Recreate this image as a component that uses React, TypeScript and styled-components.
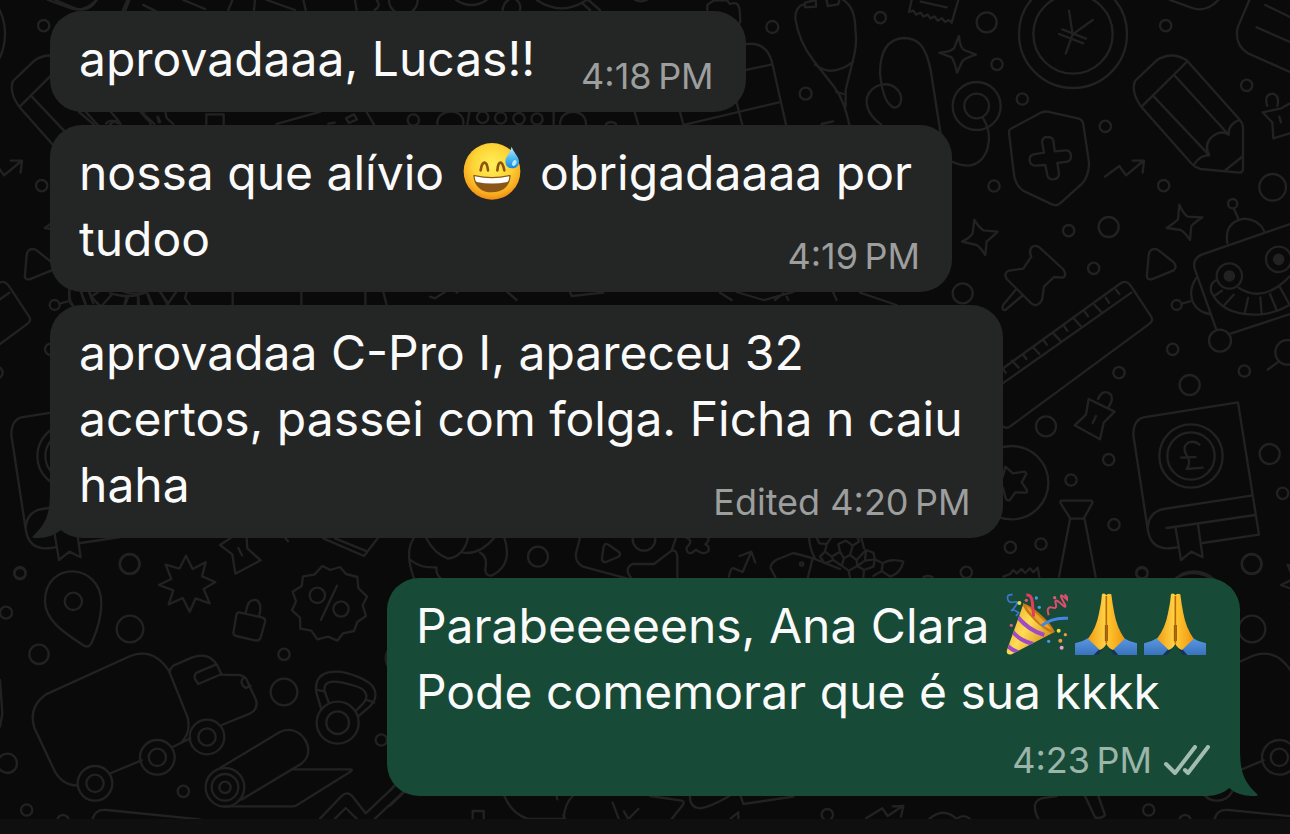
import React from "react";
import styled, { createGlobalStyle } from "styled-components";

const GlobalStyle = createGlobalStyle`
  * { box-sizing: border-box; }
  body { margin: 0; background: #0a0a0a; }
`;

type Side = "in" | "out";

const fills: Record<Side, string> = { in: "#242625", out: "#174b37" };

const Screen = styled.div`
  display: flex;
  flex-direction: column;
  min-height: 100vh;
  font-family: Inter, "Liberation Sans", sans-serif;
`;

const Chat = styled.main`
  position: relative;
  display: flex;
  flex-direction: column;
  gap: 13px;
  padding: 11px 50px 23px;
  overflow: hidden;
`;

const Wallpaper = styled.svg`
  position: absolute;
  top: 0;
  left: 0;
  fill: none;
  stroke: #222222;
  stroke-width: 7px;
  stroke-linecap: round;
  stroke-linejoin: round;
`;

const Composer = styled.footer`
  flex: 1;
  min-height: 15px;
  background: #0f0f0f;
`;

const Bubble = styled.article<{ $side: Side }>`
  position: relative;
  align-self: ${(p) => (p.$side === "in" ? "flex-start" : "flex-end")};
  margin-top: ${(p) => (p.$side === "in" ? "0" : "27px")};
  padding: ${(p) => (p.$side === "in" ? "15px 32px 16px 29px" : "15px 30px 16px 29px")};
  border-radius: 32px;
  background: ${(p) => fills[p.$side]};
  color: #fafafa;
`;

const Line = styled.p<{ $reserve?: boolean }>`
  margin: 0;
  padding-right: ${(p) => (p.$reserve ? "8px" : "0")};
  font-size: 48px;
  line-height: 66px;
  white-space: nowrap;
`;

const LastRow = styled.div`
  display: flex;
  align-items: flex-start;
  justify-content: space-between;
  gap: 46px;
`;

const Meta = styled.div<{ $side: Side }>`
  display: flex;
  align-items: center;
  justify-content: flex-end;
  gap: 12px;
  padding-top: ${(p) => (p.$side === "in" ? "30px" : "15px")};
  color: ${(p) => (p.$side === "in" ? "#9d9e9e" : "#9bb5aa")};
  font-size: 36px;
  line-height: 40px;
  white-space: nowrap;
`;

const Emoji = styled.svg`
  width: 62px;
  height: 62px;
  margin: 0 4px 0 3px;
  vertical-align: -12px;
`;

const Tail = styled.svg<{ $side: Side }>`
  position: absolute;
  bottom: -1px;
  ${(p) => (p.$side === "in" ? "left: -18px;" : "right: -18px; transform: scaleX(-1);")}
  width: 42px;
  height: 54px;
  fill: ${(p) => fills[p.$side]};
`;

const Ticks = styled.svg`
  width: 46px;
  height: 30px;
  fill: none;
  stroke: #a3bcb1;
  stroke-width: 4px;
  stroke-linecap: round;
  stroke-linejoin: round;
`;

const BubbleTail = ({ side }: { side: Side }) => (
  <Tail $side={side} viewBox="0 0 42 54" aria-hidden="true">
    <path d="M18 4C18 26 16 37 1 51Q-1 53 3 53Q18 54 29 45L40 47V4Z" />
  </Tail>
);

const SweatSmile = () => (
  <Emoji viewBox="20 30 186 186" role="img" aria-label="grinning face with sweat">
    <defs>
      <radialGradient id="face" cx="50%" cy="38%" r="62%">
        <stop offset="0" stopColor="#fff05a" />
        <stop offset=".55" stopColor="#fdd436" />
        <stop offset=".85" stopColor="#f8ac20" />
        <stop offset="1" stopColor="#ee8c14" />
      </radialGradient>
      <linearGradient id="drop" x1="0" y1="0" x2="0" y2="1">
        <stop offset="0" stopColor="#c4efff" />
        <stop offset=".5" stopColor="#56bdf2" />
        <stop offset="1" stopColor="#1689dc" />
      </linearGradient>
    </defs>
    <circle cx="113" cy="124" r="85" fill="url(#face)" />
    <path d="M79 121Q82 99 90 98T101 121M129 121Q131 99 138 98T150 121" fill="none" stroke="#8a5410" strokeWidth="8" strokeLinecap="round" />
    <path d="M57 137Q56 134 61 135Q113 147 165 135Q170 134 169 138C166 171 143 187 113 187S60 171 57 137Z" fill="#8b5718" />
    <path d="M61 139Q113 151 165 139Q165 152 159 156Q113 165 67 156Q61 151 61 139Z" fill="#ffffff" />
    <path d="M172 50C177 67 194 79 194 95C194 108 185 115 173 115S153 107 153 94C153 79 168 69 172 50Z" fill="url(#drop)" />
    <ellipse cx="180" cy="99" rx="6" ry="9" fill="#b5eaff" transform="rotate(25 180 99)" />
  </Emoji>
);

const PartyPopper = () => (
  <Emoji viewBox="45 39 186 186" role="img" aria-label="party popper">
    <defs>
      <linearGradient id="cone" x1="0" y1="0" x2="1" y2=".6">
        <stop offset="0" stopColor="#e79d24" />
        <stop offset=".5" stopColor="#ffdd55" />
        <stop offset="1" stopColor="#d38c1b" />
      </linearGradient>
      <clipPath id="coneClip">
        <path d="M98 70L47 213Q47 226 62 223L192 155Q155 130 98 70Z" />
      </clipPath>
    </defs>
    <path d="M98 70L47 213Q47 226 62 223L192 155Q155 130 98 70Z" fill="url(#cone)" />
    <g clipPath="url(#coneClip)" fill="none" stroke="#a04bc5" strokeWidth="12">
      <path d="M76 106Q110 150 160 165M60 148Q80 180 127 192M46 193Q60 210 86 218" />
    </g>
    <path d="M96 72C91 88 163 161 187 158C206 151 112 63 96 72Z" fill="#c77b15" />
    <path d="M105 78C115 82 171 130 183 151L151 134Q120 105 105 78Z" fill="#e8a62c" />
    <path d="M106 45Q122 43 124 67T128 110" fill="none" stroke="#e83a5c" strokeWidth="9" />
    <path d="M152 137Q185 111 231 115" fill="none" stroke="#4386e5" strokeWidth="9" />
    <path d="M65 44Q45 42 51 60Q55 70 70 66T73 79T62 91T83 98L75 108" fill="none" stroke="#3979d8" strokeWidth="5" />
    <path d="M173 106L170 92Q171 78 185 83T194 70T211 72T216 62T229 59T221 43" fill="none" stroke="#e14d70" strokeWidth="6" />
    <g fill="#f1dc40"><circle cx="85" cy="69" r="6" /><circle cx="203" cy="152" r="6" /></g>
    <g fill="#459be8"><circle cx="136" cy="54" r="5" /><circle cx="145" cy="82" r="5" /><circle cx="173" cy="184" r="5" /></g>
    <g fill="#ed9b3d"><circle cx="223" cy="164" r="5" /><circle cx="208" cy="182" r="6" /></g>
    <g fill="#dd5a79"><circle cx="106" cy="61" r="5" /><circle cx="191" cy="53" r="5" /><circle cx="61" cy="136" r="5" /></g>
    <circle cx="212" cy="203" r="6" fill="#ef9ccd" />
  </Emoji>
);

const FoldedHands = () => (
  <Emoji viewBox="252 39 186 186" role="img" aria-label="folded hands">
    <defs>
      <linearGradient id="hand" x1="0" y1="0" x2="1" y2="0">
        <stop offset="0" stopColor="#f09d13" />
        <stop offset=".45" stopColor="#ffd044" />
        <stop offset=".55" stopColor="#ffc52f" />
        <stop offset="1" stopColor="#ee9610" />
      </linearGradient>
      <linearGradient id="cuff" x1="0" y1="0" x2="0" y2="1">
        <stop offset="0" stopColor="#5a98e0" />
        <stop offset="1" stopColor="#3a72bd" />
      </linearGradient>
    </defs>
    <path d="M252 190Q274 186 292 174L326 209L318 225H252ZM438 190Q416 186 398 174L364 209L372 225H438Z" fill="url(#cuff)" />
    <path d="M308 225L326 206L336 207L322 225ZM382 225L366 206L356 207L368 225Z" fill="#173353" />
    <path d="M333 42Q342 38 346 46Q351 38 361 43Q364 70 370 100Q378 145 401 176L366 210Q352 204 346 191Q340 204 326 210L291 176Q316 145 324 100Q331 70 333 42Z" fill="url(#hand)" />
    <path d="M346 48V190" fill="none" stroke="#b96b08" strokeWidth="5" />
    <path d="M343 135V183M349 135V183" fill="none" stroke="#8b5208" strokeWidth="3" />
  </Emoji>
);

type Dot = [number, number, number];
const Dots = ({ items }: { items: Dot[] }) => (
  <>
    {items.map(([x, y, r]) => (
      <circle key={`${x}-${y}-${r}`} cx={x} cy={y} r={r} />
    ))}
  </>
);

/* School, medical and robot doodles: the upper half of the repeating tile. */
const UpperDoodles = () => (
  <g id="upper">
    <g transform="translate(860 0) scale(.33333)">
      <Dots
        items={[
          [61, 53, 17], [411, 193, 17], [487, 297, 17], [736, 379, 17], [402, 558, 17], [911, 557, 17],
          [1160, 256, 17], [917, 77, 17], [626, 692, 17], [701, 805, 17], [1118, 611, 14], [950, 915, 15],
          [380, 67, 30], [746, 681, 30], [308, 880, 30], [1238, 562, 40], [639, 102, 162], [639, 102, 119],
          [350, 318, 72], [350, 318, 37], [1080, 1022, 33], [1108, 828, 38], [1256, 778, 38],
        ]}
      />
      <g fill="#222222"><circle cx="1108" cy="828" r="14" /><circle cx="1256" cy="778" r="14" /></g>
      <path d="M627 32L638 103L698 60M638 103L617 161M607 88L678 116M597 102L670 130" />
      <path d="M155 0L147 36L160 32L168 44L182 38L190 50L203 44L211 55L224 49L233 62L246 55L255 66L266 60L275 68L295 0M182 5L260 22" />
      <path d="M275 485Q302 497 326 497C385 490 405 410 368 352" />
      <path d="M242 402L212 210C198 142 177 114 132 114C76 117 60 167 60 220C65 269 76 316 104 323C126 319 130 288 112 269C85 240 36 252 22 290C12 324 38 355 64 374" />
      <path d="M297 108Q300 143 312 150L348 164Q315 174 307 184L291 218Q284 185 275 172L238 158Q270 156 282 145Z" />
      <path d="M343 659Q355 681 370 691L413 695Q393 715 380 724L376 765Q360 741 350 735L306 725Q329 714 338 700Z" />
      <path d="M958 614Q970 641 983 650L1027 652Q1004 668 994 678L990 720Q973 695 962 690L920 684Q944 668 954 658Z" />
      <path d="M545 337Q558 332 572 337L654 355Q668 358 670 373L687 487Q688 526 666 551L603 608Q590 620 576 613L489 572Q464 554 461 516L447 398Q446 390 455 385Z" />
      <path d="M546 425Q548 411 562 411Q578 411 580 422L584 454L616 451Q630 450 633 466Q634 482 622 485L592 489L597 521Q596 537 580 538Q565 539 562 526L556 495L525 497Q511 496 509 481Q508 467 520 463L552 458Z" />
      <path d="M735 530L778 498L798 526L850 483M818 482L852 482L848 518" />
      <path d="M825 243L890 181Q935 152 980 181L1138 358Q1148 369 1149 382V505Q1149 518 1138 518L1022 507Q1006 503 995 491L845 322Q812 277 825 243Z" />
      <path d="M845 320L980 186M878 286L1048 466M943 226L1106 404M1004 491Q1020 465 1048 466Q1030 434 1056 411T1106 404Q1104 372 1138 360M1097 510L1149 468" />
      <path d="M1168 0L1133 82Q1122 134 1164 160L1290 216M1216 15L1290 51M1190 82L1290 126M930 0L1000 25Q1040 37 1075 0" />
      <path d="M1222 318Q1210 282 1240 281Q1260 290 1252 318M1290 310L1264 325L1208 337Q1224 355 1237 367L1240 415L1290 400M1258 350L1263 367" />
      <path d="M515 742Q525 733 538 742L609 807Q623 827 608 833L582 831L552 860L546 900Q532 924 514 910L440 837Q430 817 447 812L490 806L514 770Q506 751 515 742ZM466 871L430 914Q423 932 436 930L486 888" />
      <path d="M873 750Q886 743 897 752L940 786Q953 800 941 811L875 838Q858 840 861 823L866 765Q867 756 873 750Z" />
      <path d="M1290 672L1025 764Q995 777 1005 809L1068 986M1112 1001L1290 942M1102 729Q1092 665 1154 656Q1198 660 1212 692M1122 626L1135 656M1008 835Q985 870 998 905Q1012 935 1048 942M990 904L965 911" />
      <path d="M1070 840Q1047 850 1054 877C1082 934 1142 948 1205 943Q1250 938 1290 914M1136 863Q1210 912 1290 828M1066 886L1086 872M1094 914L1121 884M1155 936L1164 894M1205 942L1201 892M1250 930L1230 882M1286 909L1260 862" />
    </g>
    <g transform="translate(860 260) scale(.33333)">
      <Dots
        items={[
          [938, 268, 17], [1153, 333, 17], [777, 338, 17], [746, 599, 17], [633, 660, 17], [762, 794, 17],
          [451, 862, 17], [543, 852, 17], [319, 937, 17], [846, 938, 17], [1268, 700, 17],
          [989, 375, 30], [558, 499, 30], [1229, 582, 30], [1175, 912, 30], [993, 588, 95], [993, 588, 71],
          [455, 668, 110], [1283, 277, 37],
        ]}
      />
      <path d="M1257 304L1223 329" />
      <path d="M360 375L779 72Q797 57 812 77L873 169Q882 183 866 193L448 501Q431 509 420 489L360 400M370 411L814 98M426 323L437 338M456 302L476 323M488 282L499 297M518 260L538 282M550 239L560 254M580 220L600 241M612 198L622 212M642 176L662 198M674 155L684 169M704 135L724 156M737 113L747 128M768 89L778 102" />
      <path d="M714 417Q727 386 751 402Q763 416 745 442M686 417L714 431L764 455L731 488L720 538L644 496L678 464ZM708 468L698 489" />
      <path d="M436 620L459 640L493 635Q503 638 496 647L485 667L501 690Q503 699 494 698L466 697L449 721Q439 723 436 711L429 683L400 666L429 649Z" />
      <path d="M604 722H693Q700 723 696 731L671 776H631L602 730Q600 724 604 722ZM630 778L597 950M674 778L707 950" />
      <path d="M850 472Q820 480 820 525L863 807Q872 873 938 864L951 862M850 472L1134 427L1197 824L1028 849M863 807Q865 755 912 747L1174 707M920 804L1185 765M946 800L963 900L994 875L1028 892L1014 793" />
      <path d="M1018 554Q1005 540 984 548Q965 563 980 586Q995 606 980 627M963 593L1006 591M980 627L1028 623" />
    </g>
  </g>
);

/* Truck, map pin and kettlebell doodles: the lower half of the tile. */
const LowerDoodles = () => (
  <g id="lower">
    <g transform="translate(0 530) scale(.33333)">
      <Dots
        items={[
          [60, 131, 17], [18, 248, 18], [852, 373, 17], [550, 784, 17], [80, 840, 17], [1144, 630, 17],
          [389, 102, 29], [117, 373, 29], [22, 700, 29], [390, 297, 40], [852, 486, 40], [220, 214, 26],
          [952, 196, 23], [1023, 237, 23], [285, 760, 52], [285, 760, 26], [472, 682, 52], [472, 682, 26],
          [621, 621, 52], [621, 621, 26], [675, 772, 58], [675, 772, 40], [675, 772, 17],
          [1013, 578, 63], [1013, 578, 34], [189, 872, 17], [1202, 385, 45],
        ]}
      />
      <path d="M276 336Q268 355 252 347C202 314 135 275 135 214C135 90 304 97 304 220C304 265 290 305 276 336Z" />
      <path d="M558 77L578 117L617 97L606 139L646 156L611 177L629 220L587 205L569 245L548 204L506 223L520 181L477 165L514 147L497 104L538 116Z" />
      <path d="M660 45L691 25M660 45L697 73L706 131L782 91L742 55L740 25M715 54L726 76" />
      <path d="M718 247L788 263Q797 267 795 276L782 323Q777 334 765 331L708 318Q698 314 701 303L709 255Q711 246 718 247ZM738 245Q745 205 767 210Q784 214 780 246L777 260" />
      <path d="M967 108L991 120L1020 111L1038 132L1072 141L1075 174L1101 200L1088 226L1098 258L1072 276L1062 303L1029 310L1012 332L984 320L952 328L934 302L901 296L900 263L876 241L888 214L878 185L905 168L909 139L943 134ZM1011 167L963 269" />
      <path d="M233 767Q183 766 160 715L103 593Q84 531 138 493L391 378Q461 352 507 423L562 560Q575 604 544 638M333 729L425 691M518 651L571 625M665 585L751 550Q775 537 768 510L739 447Q728 433 707 435L665 434L650 403Q625 365 577 382L520 407Q508 418 509 430M649 403L590 428Q581 435 585 447L595 462L665 432M729 445Q717 462 738 474L752 467" />
      <path d="M660 714L838 607C899 574 957 662 904 701L724 809M874 718H1053Q1059 720 1051 725L890 826Q886 829 878 829H671" />
      <path d="M964 538L949 488C939 415 1014 415 1072 440C1132 462 1139 498 1110 529L1076 558M986 517L974 484C967 441 1023 455 1066 468C1106 480 1107 505 1084 526L1069 541M949 479L972 484M1098 509L1123 518" />
      <path d="M856 25L864 34M970 25L1092 78L1133 25M1005 25L1103 65" />
      <path d="M278 866Q286 836 320 840L600 868M960 866L1023 800Q1041 780 1059 801L1097 850L1182 770M1005 866L1037 834L1070 866M1125 866L1216 780M0 450L7 550L0 590" />
    </g>
  </g>
);

/* Pieces that show between the bubbles. */
const GapDoodles = () => (
  <>
    <g transform="scale(.33333)">
      <path d="M165 0L230 27Q270 35 290 0M388 0L376 30M430 15L460 30M550 0L615 27M697 0L685 30M765 0L762 30M800 0L885 30M910 0L917 30M1065 0L1070 30M1130 0Q1145 18 1124 30" />
      <path d="M237 336L282 374M318 370Q335 354 354 370M425 336L463 372M496 336L500 354L520 372M475 352L480 366M619 372V343H671V372M830 372L960 336M1100 336L1122 374M1038 355L1062 343L1071 358L1047 369ZM985 371L1004 368" />
      <Dots items={[[1210, 0, 43], [1240, 360, 17]]} />
      <path d="M208 872V900Q209 910 215 914M242 872L257 912M265 872L280 910M330 880Q395 898 440 876M385 890L375 915M414 888V915M442 882L453 913M480 876L505 910L528 876M560 876L555 895L570 915M698 876V915M904 876V915M1096 876V915M1150 876L1160 915" />
    </g>
    <g transform="translate(430 0) scale(.33333)">
      <Dots items={[[1027, 81, 18], [1127, 281, 18], [158, 352, 17], [212, 354, 17], [267, 356, 17], [321, 357, 17]]} />
      <path d="M78 0Q125 30 170 0M218 30Q220 8 236 0M260 0Q275 12 270 30M320 0Q395 50 470 0M455 8L480 30M475 0L510 30M615 0Q632 8 650 0M832 30V15L850 2L890 0L900 12Q925 2 929 30L931 65L920 78" />
      <path d="M22 372C20 322 105 322 100 372M118 336L112 374M371 336V372M390 372C392 322 468 324 468 372M528 372Q543 360 558 372M614 336L625 374M750 336L760 374M765 374L1047 307M938 212L1023 194M930 136Q1006 115 1026 186L1068 374M918 300L937 374" />
      <path d="M1120 13Q1096 20 1096 55Q1106 124 1150 181L1215 264Q1242 300 1258 374M1240 0Q1277 24 1276 90Q1283 130 1268 184L1247 270V320M1155 193Q1205 235 1270 185M1218 275L1240 282M1125 8L1158 0M1125 8V22L1158 20V5M1190 0L1193 18L1225 13L1228 0M1175 372L1209 364" />
      <path d="M0 890L15 895L45 876M80 878L84 874M232 876L260 900M420 876L425 888L520 878M870 878L905 900M920 876L1000 900M1005 900L1090 876M1070 890L1075 900M1035 900L1060 880M1210 878L1220 900M1290 878L1400 915" />
    </g>
    <g transform="translate(390 500) scale(.33333)">
      <Dots items={[[444, 170, 30], [762, 118, 34], [1235, 192, 5], [1312, 944, 17]]} />
      <path d="M72 113C50 145 55 190 72 235M62 180Q90 205 140 202Q136 221 152 235M108 113Q132 160 174 176Q222 168 234 113M220 158Q270 164 313 113M270 158Q294 170 286 205Q284 228 305 227Q370 195 343 113" />
      <path d="M570 113L558 160Q553 186 579 200L710 235M641 140Q646 126 658 136L687 156Q695 164 684 171L648 186Q635 188 636 174ZM858 113L845 152L792 192H728Q700 205 724 235M845 152Q860 148 862 170V232M890 113Q912 123 890 142Q888 161 905 159L918 149Q938 167 955 154Q960 138 946 133Q963 116 952 113" />
      <path d="M1017 230Q1022 200 1032 205L1058 216L1084 155M1049 168L1084 155L1096 188M1156 231L1142 205Q1140 192 1158 180L1210 159L1270 175L1350 207M1268 175L1254 231M1257 113Q1260 150 1275 175" />
      <path d="M0 872L17 852M0 917L44 875M343 888Q366 942 415 957H520Q525 910 548 888M520 945L525 957M248 957V933H281V957M500 890L502 898M668 908L686 956M702 934L715 957L745 927M780 888L875 902Q884 904 879 914L845 957M900 888Q898 923 932 925Q963 920 1018 888M1052 888L1060 912L1210 890M1022 955L1045 937V957" />
    </g>
    <g transform="translate(840 500) scale(.33333)">
      <path d="M-70 113L-62 130L-40 132L-28 115M-40 132L-45 155L-25 170L0 155L-5 132L18 122L38 137L30 165L50 180L78 150L100 158L105 178L128 190L125 213L100 228M38 137L58 124L52 113M0 155L12 175L30 165M12 175L5 197L26 212L52 198L50 180M52 198L72 210L70 232M78 150L75 182L105 178M75 182L52 198M72 210L100 200L105 178M26 212L30 232M5 197L-20 180L-25 170M-20 180L-45 190L-60 170L-45 155M64 113L72 145M128 190Q154 174 190 185Q183 218 151 230L125 213" />
      <path d="M490 230L510 222L520 210L530 220L545 207L555 219L570 205L580 217L593 203L598 230M250 232Q264 224 278 232M1010 233Q1060 205 1110 233" />
      <path d="M78 955L127 925L143 948L188 918M158 919L190 918L183 950M268 957Q310 920 350 957Q370 940 390 957M595 957Q570 905 605 895L650 888M735 888L765 952Q785 957 795 945L775 888" />
    </g>
  </>
);

const Background = () => (
  <Wallpaper width="1290" height="819" viewBox="0 0 1290 819" aria-hidden="true">
    <UpperDoodles />
    <use href="#upper" x="-1122" />
    <LowerDoodles />
    <use href="#lower" x="1122" />
    <GapDoodles />
  </Wallpaper>
);

export default function App() {
  return (
    <Screen>
      <GlobalStyle />
      <Chat>
        <Background />
        <Bubble $side="in">
          <LastRow>
            <Line>aprovadaaa, Lucas!!</Line>
            <Meta $side="in"><time>4:18&#8201;PM</time></Meta>
          </LastRow>
        </Bubble>
        <Bubble $side="in">
          <Line $reserve>nossa que alívio <SweatSmile /> obrigadaaaa por</Line>
          <LastRow>
            <Line>tudoo</Line>
            <Meta $side="in"><time>4:19&#8201;PM</time></Meta>
          </LastRow>
        </Bubble>
        <Bubble $side="in">
          <BubbleTail side="in" />
          <Line $reserve>aprovadaa C-Pro I, apareceu 32</Line>
          <Line $reserve>acertos, passei com folga. Ficha n caiu</Line>
          <LastRow>
            <Line>haha</Line>
            <Meta $side="in"><span>Edited <time>4:20&#8201;PM</time></span></Meta>
          </LastRow>
        </Bubble>
        <Bubble $side="out">
          <BubbleTail side="out" />
          <Line>Parabeeeeens, Ana Clara <PartyPopper /><FoldedHands /><FoldedHands /></Line>
          <Line>Pode comemorar que é sua kkkk</Line>
          <Meta $side="out">
            <time>4:23&#8201;PM</time>
            <Ticks viewBox="0 0 46 30" role="img" aria-label="delivered">
              <path d="M2 19L11 28L31 2M21 25L24 28L44 2" />
            </Ticks>
          </Meta>
        </Bubble>
      </Chat>
      <Composer />
    </Screen>
  );
}
